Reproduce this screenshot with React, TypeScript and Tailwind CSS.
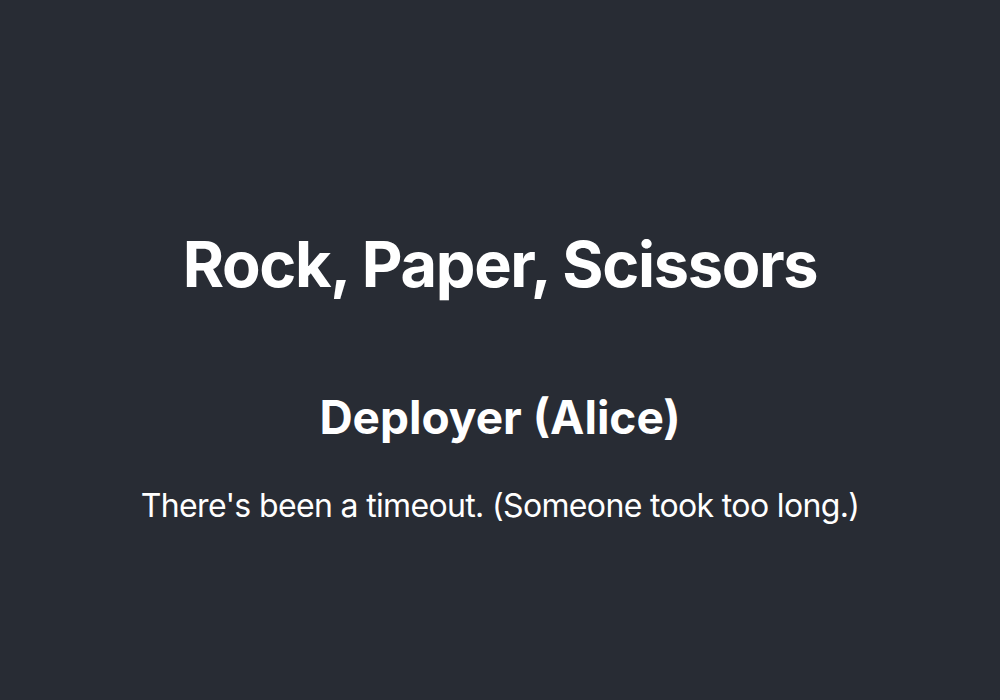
export default function App() {
  return (
    <div
      className="min-h-screen bg-[#282c34] text-white flex flex-col items-center pt-[233px] text-center"
      style={{ fontFamily: 'Inter, "Noto Sans", sans-serif' }}
    >
      <h1 className="text-[63px] font-bold leading-none tracking-[-1.3px]">Rock, Paper, Scissors</h1>
      <h2 className="mt-[98px] text-[46px] font-bold leading-none tracking-[0px]">Deployer (Alice)</h2>
      <p className="mt-[50px] text-[32px] leading-none tracking-[-0.65px]">
        There's been a timeout. (Someone took too long.)
      </p>
    </div>
  );
}
